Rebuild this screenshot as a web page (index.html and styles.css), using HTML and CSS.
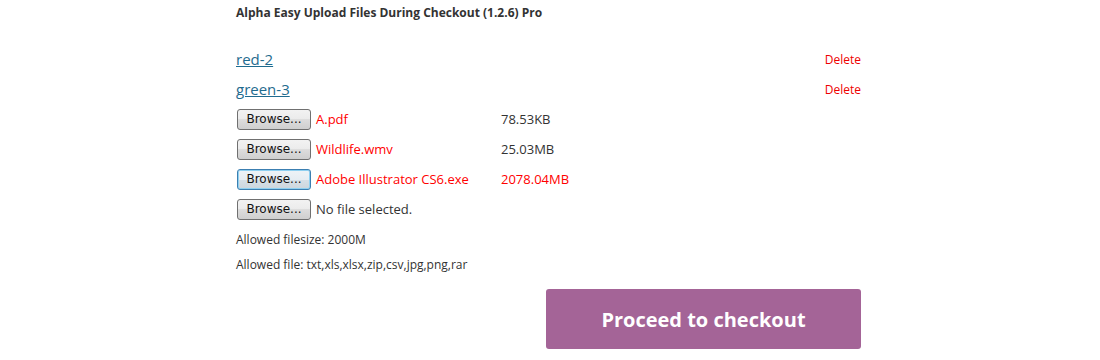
FILE: index.html
```html
<!DOCTYPE html>
<html>
<head>
<meta charset="utf-8">
<link rel="stylesheet" href="styles.css">
</head>
<body>
<div class="wrap">
  <h3 class="title">Alpha Easy Upload Files During Checkout (1.2.6) Pro</h3>
  <div class="item"><a class="link" href="#">red-2</a><span class="del">Delete</span></div>
  <div class="item"><a class="link" href="#">green-3</a><span class="del">Delete</span></div>
  <div class="file"><button class="browse">Browse...</button><span class="name err">A.pdf</span><span class="size">78.53KB</span></div>
  <div class="file"><button class="browse">Browse...</button><span class="name err">Wildlife.wmv</span><span class="size">25.03MB</span></div>
  <div class="file"><button class="browse focus">Browse...</button><span class="name err">Adobe Illustrator CS6.exe</span><span class="size err">2078.04MB</span></div>
  <div class="file"><button class="browse">Browse...</button><span class="name">No file selected.</span></div>
  <p class="note n1">Allowed filesize: 2000M</p>
  <p class="note n2">Allowed file: txt,xls,xlsx,zip,csv,jpg,png,rar</p>
  <div class="actions"><a class="checkout" href="#">Proceed to checkout</a></div>
</div>
</body>
</html>
```
FILE: styles.css
```css
html, body { margin: 0; padding: 0; background: #fff; }
body { font-family: "Open Sans", "Noto Sans", sans-serif; color: #333; }
.wrap { width: 625px; margin-left: 236px; }
.title { margin: 0; padding-top: 5px; height: 39px; font-size: 12px; font-weight: 700; color: #333; line-height: 16px; }
.item { display: flex; justify-content: space-between; align-items: center; height: 30px; }
.link { color: #1f6b8e; font-size: 15px; text-decoration: underline; }
.del { color: #e00; font-size: 12px; }
.file { display: flex; align-items: center; height: 30px; font-size: 13px; }
.browse { width: 74px; height: 21px; margin-left: 1px; padding: 0 0 1px; font-family: "DejaVu Sans", "Open Sans", sans-serif; font-size: 12px; color: #111; border: 1px solid #707070; border-radius: 3px; background: linear-gradient(#f2f2f2, #ebebeb 50%, #dddddd 50%, #cfcfcf); }
.browse.focus { border-color: #3c7fb1; box-shadow: inset 0 0 0 1px #8fd0f0; background: linear-gradient(#eef3f7, #e6edf2 50%, #d7e0e7 50%, #cdd6dd); }
.name { margin-left: 5px; width: 185px; color: #333; }
.size { color: #333; }
.err { color: #f00; }
.note { margin: 0; font-size: 12px; height: 25px; line-height: 20px; }
.n1 { margin-top: 6px; }
.actions { display: flex; justify-content: flex-end; margin-top: 9px; }
.checkout { display: flex; align-items: center; justify-content: center; width: 315px; height: 60px; background: #a46497; color: #fff; font-size: 20px; font-weight: 700; text-decoration: none; border-radius: 3px; }
```
